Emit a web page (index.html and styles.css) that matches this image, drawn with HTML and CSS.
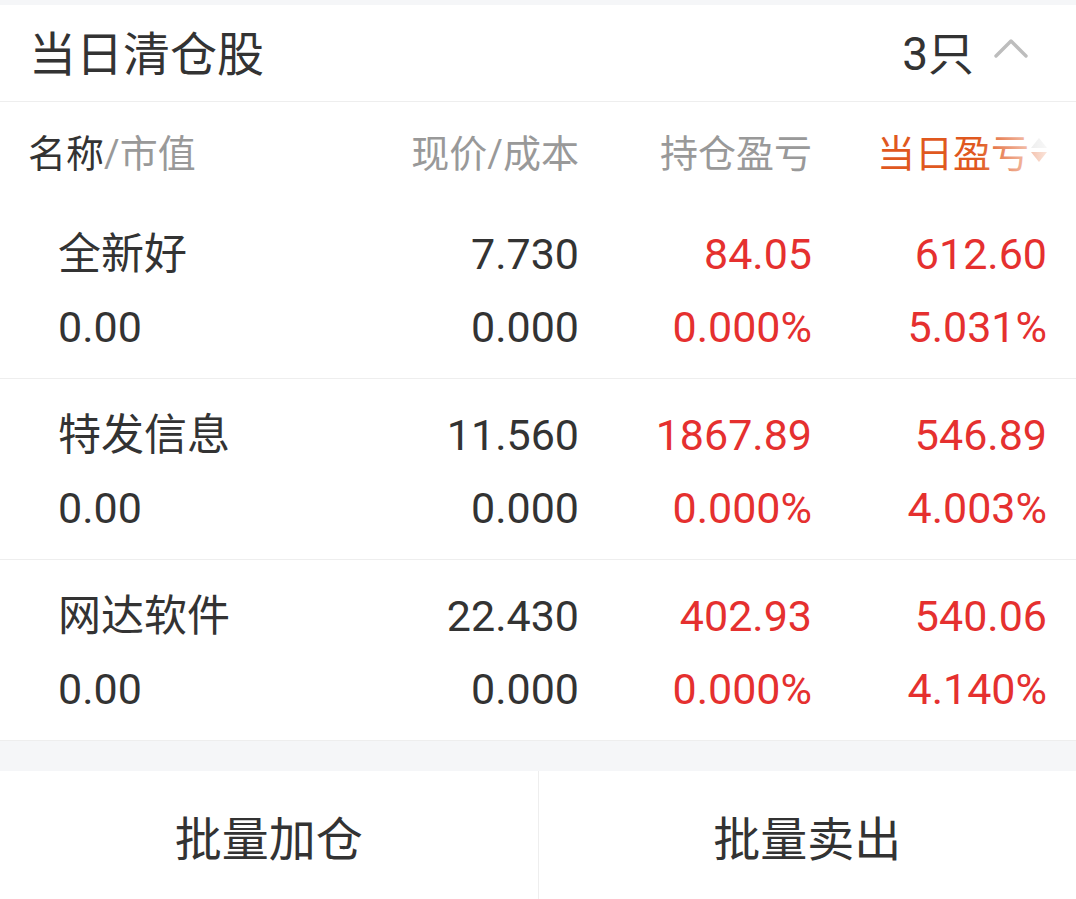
FILE: index.html
```html
<!DOCTYPE html>
<html lang="zh-CN">
<head>
    <meta charset="UTF-8">
    <meta name="viewport" content="width=device-width, initial-scale=1.0">
    <title>当日清仓股</title>
    <link rel="stylesheet" href="styles.css">
</head>
<body>
    <div class="top-strip"></div>

    <div class="title-bar">
        <h1>当日清仓股</h1>
        <div class="count">
            <span>3只</span>
            <svg class="chevron" width="34" height="20" viewBox="0 0 34 20">
                <polyline points="2,18 17,3 32,18" fill="none" stroke="#bdbdbd" stroke-width="3.4" stroke-linecap="round" stroke-linejoin="round"/>
            </svg>
        </div>
    </div>

    <div class="grid head-row">
        <div class="cell left"><span class="dark">名称</span>/市值</div>
        <div class="cell">现价/成本</div>
        <div class="cell">持仓盈亏</div>
        <div class="cell active">
            当日盈亏
            <span class="sort">
                <i class="up"></i>
                <i class="down"></i>
            </span>
        </div>
    </div>

    <div class="grid stock-row">
        <div class="cell left">全新好<br>0.00</div>
        <div class="cell">7.730<br>0.000</div>
        <div class="cell red">84.05<br>0.000%</div>
        <div class="cell red">612.60<br>5.031%</div>
    </div>
    <div class="grid stock-row">
        <div class="cell left">特发信息<br>0.00</div>
        <div class="cell">11.560<br>0.000</div>
        <div class="cell red">1867.89<br>0.000%</div>
        <div class="cell red">546.89<br>4.003%</div>
    </div>
    <div class="grid stock-row">
        <div class="cell left">网达软件<br>0.00</div>
        <div class="cell">22.430<br>0.000</div>
        <div class="cell red">402.93<br>0.000%</div>
        <div class="cell red">540.06<br>4.140%</div>
    </div>

    <div class="gap"></div>

    <div class="actions">
        <button>批量加仓</button>
        <button>批量卖出</button>
    </div>
</body>
</html>
```

FILE: styles.css
```css
/* 当日清仓股 */
body {
    margin: 0;
    padding: 0;
    background-color: #fff;
    font-family: Roboto, "Noto Sans CJK SC", sans-serif;
    color: #333;
}
.top-strip {
    height: 5px;
    background-color: #f5f6f8;
}
.title-bar {
    height: 90px;
    display: flex;
    align-items: center;
    justify-content: space-between;
    padding: 0 48px 6px 29px;
    border-bottom: 1px solid #eeeeee;
}
.title-bar h1 {
    margin: 0;
    font-size: 47px;
    font-weight: normal;
    color: #333;
}
.count {
    display: flex;
    align-items: center;
    gap: 20px;
    font-size: 46px;
    color: #333;
}
.chevron {
    margin-top: -4px;
}
.grid {
    display: grid;
    grid-template-columns: 1fr 200px 233px 235px;
    padding-right: 29px;
}
.cell {
    text-align: right;
    white-space: nowrap;
}
.cell.left {
    text-align: left;
}
.head-row {
    height: 96px;
    align-items: center;
    font-size: 38px;
    color: #999;
}
.head-row .left {
    padding-left: 28px;
}
.dark {
    color: #333;
}
.head-row .active {
    position: relative;
    color: #e0581e;
    padding-right: 18px;
}
.head-row .active::after {
    content: "";
    position: absolute;
    top: -10px;
    bottom: -10px;
    right: -30px;
    width: 100px;
    background: linear-gradient(to right, rgba(255, 255, 255, 0), rgba(255, 255, 255, 0.9) 75%);
}
.sort {
    position: absolute;
    right: 0;
    top: 50%;
    margin-top: -14px;
    width: 16px;
    height: 28px;
}
.sort i {
    position: absolute;
    left: 0;
    width: 0;
    height: 0;
    border-left: 8px solid transparent;
    border-right: 8px solid transparent;
}
.sort .up {
    top: 2px;
    border-bottom: 10px solid #cfcfcf;
}
.sort .down {
    bottom: 2px;
    border-top: 10px solid #e0581e;
}
.stock-row {
    padding-top: 20px;
    padding-bottom: 14px;
    font-size: 43px;
    line-height: 73px;
    border-bottom: 1px solid #eeeeee;
}
.stock-row .left {
    padding-left: 58px;
}
.red {
    color: #e5302f;
}
.gap {
    height: 30px;
    background-color: #f5f6f8;
}
.actions {
    display: flex;
    height: 129px;
}
.actions button {
    flex: 1;
    border: none;
    background-color: #fff;
    font-family: "Noto Sans CJK SC", sans-serif;
    font-size: 47px;
    color: #333;
    padding: 0;
}
.actions button:first-child {
    border-right: 1px solid #eeeeee;
}
```
